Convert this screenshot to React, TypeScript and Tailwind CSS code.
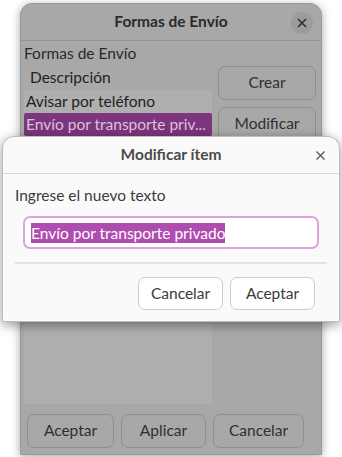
import React from 'react';

const font = { fontFamily: 'Lato, "Noto Sans", sans-serif' };

function BackButton({ label, className = '' }: { label: string; className?: string }) {
  return (
    <div
      className={`flex items-center justify-center rounded-[7px] border border-[#8e8e8e] text-[15.5px] text-[#2f2f2f] ${className}`}
    >
      {label}
    </div>
  );
}

export default function App() {
  return (
    <div className="relative w-[342px] h-[457px] bg-white overflow-hidden" style={font}>
      {/* dimmed parent window */}
      <div className="ml-[20px] mt-[3px] w-[302px] h-[452px] rounded-t-[12px] bg-[#a8a8a8] border border-[#9a9a9a] shadow-[0_2px_10px_rgba(0,0,0,0.35)] flex flex-col">
        <div className="relative h-[37px] flex items-center justify-center border-b border-[#939393]">
          <span className="font-bold text-[15.5px] text-[#2b2b2b]">Formas de Envío</span>
          <div className="absolute right-[8px] top-[8px] w-[22px] h-[22px] rounded-full bg-[#9c9c9c] flex items-center justify-center">
            <svg width="10" height="10" viewBox="0 0 10 10">
              <path d="M1 1L9 9M9 1L1 9" stroke="#2b2b2b" strokeWidth="1.5" />
            </svg>
          </div>
        </div>
        <div className="flex-1 flex flex-col px-[3px]">
          <div className="h-[25px] flex items-center text-[15.5px] text-[#2a2a2a]">Formas de Envío</div>
          <div className="flex gap-[6px] flex-1">
            <div className="w-[188px] h-[338px] bg-[#afafaf] flex flex-col">
              <div className="h-[24px] flex items-center pl-[6px] bg-[#a9a9a9] text-[15.5px] text-[#222]">Descripción</div>
              <div className="h-[23px] flex items-center pl-[2px] text-[15.5px] text-[#222]">Avisar por teléfono</div>
              <div className="h-[23px] flex items-center pl-[2px] bg-[#7d357d] text-[15.5px] text-[#d9c4d9] rounded-[2px] whitespace-nowrap overflow-hidden">
                Envío por transporte priv...
              </div>
            </div>
            <div className="flex flex-col gap-[7px] w-[98px]">
              <BackButton label="Crear" className="h-[34px]" />
              <BackButton label="Modificar" className="h-[34px]" />
            </div>
          </div>
          <div className="flex gap-[7px] pl-[3px] pt-[9px] pb-[6px]">
            <BackButton label="Aceptar" className="w-[87px] h-[34px]" />
            <BackButton label="Aplicar" className="w-[85px] h-[34px]" />
            <BackButton label="Cancelar" className="w-[91px] h-[34px]" />
          </div>
        </div>
      </div>

      {/* modal dialog */}
      <div className="absolute left-[2px] top-[136px] w-[338px] h-[186px] rounded-t-[12px] bg-[#fafafa] border border-[#bdbdbd] shadow-[0_3px_12px_rgba(0,0,0,0.4)] flex flex-col">
        <div className="relative h-[37px] flex items-center justify-center border-b border-[#d8d8d8]">
          <span className="font-bold text-[15.5px] text-[#4a4a4a]">Modificar ítem</span>
          <svg className="absolute right-[14px] top-[14px]" width="9" height="9" viewBox="0 0 9 9">
            <path d="M0.5 0.5L8.5 8.5M8.5 0.5L0.5 8.5" stroke="#555" strokeWidth="1.3" />
          </svg>
        </div>
        <div className="px-[12px] flex flex-col">
          <div className="h-[40px] pt-[4px] flex items-center text-[15.5px] text-[#3c3c3c]">Ingrese el nuevo texto</div>
          <div className="mx-[8px] mt-[2px] h-[33px] rounded-[7px] border-2 border-[#dba2db] bg-white flex items-center pl-[6px]">
            <span className="bg-[#b04cb0] text-white text-[15.5px] leading-[20px]">Envío por transporte privado</span>
          </div>
          <div className="mt-[13px] h-[2px] bg-[#e2e2e2]" />
          <div className="flex justify-end gap-[7px] pr-[12px] pt-[13px]">
            <div className="w-[85px] h-[33px] rounded-[7px] border border-[#cdcdcd] bg-white flex items-center justify-center text-[15.5px] text-[#3a3a3a]">
              Cancelar
            </div>
            <div className="w-[85px] h-[33px] rounded-[7px] border border-[#cdcdcd] bg-white flex items-center justify-center text-[15.5px] text-[#3a3a3a]">
              Aceptar
            </div>
          </div>
        </div>
      </div>
    </div>
  );
}
